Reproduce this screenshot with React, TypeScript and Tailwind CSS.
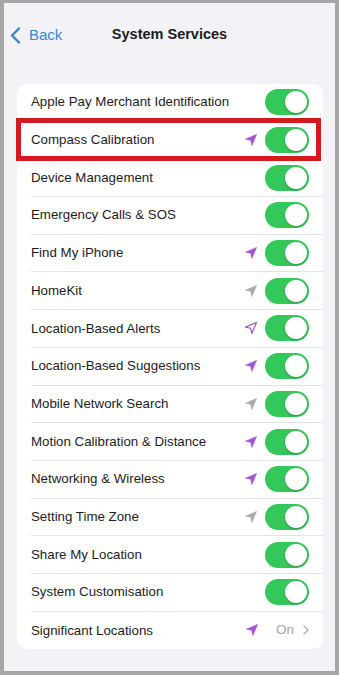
import React from 'react';

type Arrow = 'purple' | 'gray' | 'outline' | null;

type Row = {
  label: string;
  arrow: Arrow;
  detail?: string;
};

const rows: Row[] = [
  { label: 'Apple Pay Merchant Identification', arrow: null },
  { label: 'Compass Calibration', arrow: 'purple' },
  { label: 'Device Management', arrow: null },
  { label: 'Emergency Calls & SOS', arrow: null },
  { label: 'Find My iPhone', arrow: 'purple' },
  { label: 'HomeKit', arrow: 'gray' },
  { label: 'Location-Based Alerts', arrow: 'outline' },
  { label: 'Location-Based Suggestions', arrow: 'purple' },
  { label: 'Mobile Network Search', arrow: 'gray' },
  { label: 'Motion Calibration & Distance', arrow: 'purple' },
  { label: 'Networking & Wireless', arrow: 'purple' },
  { label: 'Setting Time Zone', arrow: 'gray' },
  { label: 'Share My Location', arrow: null },
  { label: 'System Customisation', arrow: null },
  { label: 'Significant Locations', arrow: 'purple', detail: 'On' },
];

function LocationArrow({ kind }: { kind: Exclude<Arrow, null> }) {
  const color = kind === 'gray' ? '#a9a9ad' : '#a453d6';
  const filled = kind !== 'outline';
  return (
    <svg width="14" height="14" viewBox="0 0 24 24" className="shrink-0">
      <polygon
        points="2.5 10.5 21.5 2.5 13.5 21.5 11.5 12.5 2.5 10.5"
        fill={filled ? color : 'none'}
        stroke={color}
        strokeWidth={filled ? 1 : 2}
        strokeLinejoin="round"
      />
    </svg>
  );
}

function Toggle() {
  return (
    <div className="flex h-[26px] w-[44px] shrink-0 items-center justify-end rounded-full bg-[#34c759] p-[2px]">
      <div className="h-[22px] w-[22px] rounded-full bg-white shadow-[0_1px_2px_rgba(0,0,0,0.25)]" />
    </div>
  );
}

export default function App() {
  return (
    <div
      className="h-[675px] w-[339px] bg-[#a6a6a6] px-[4px] pb-[4px] pt-[3px]"
      style={{ fontFamily: '"Liberation Sans", Arial, sans-serif' }}
    >
      <div className="flex h-full flex-col bg-[#f2f2f7]">
        <div className="relative flex h-[64px] items-center justify-center">
          <div className="absolute left-[6px] flex items-center gap-[8px] text-[15px] text-[#3b82d6]">
            <svg width="11" height="17" viewBox="0 0 11 17">
              <path d="M9 1.5 L2 8.5 L9 15.5" fill="none" stroke="#3b82d6" strokeWidth="2.4" strokeLinecap="round" strokeLinejoin="round" />
            </svg>
            <span>Back</span>
          </div>
          <span className="text-[14.5px] font-bold text-[#1c1c1e]">System Services</span>
        </div>

        <div className="relative ml-[13px] mr-[12px] mt-[17px] rounded-[10px] bg-white">
          {rows.map((row, i) => (
            <div key={row.label} className="flex h-[37.7px] items-center pl-[14px]">
              <div
                className={`flex h-full flex-1 items-center pr-[14px] ${
                  i < rows.length - 1 ? 'border-b border-[#e3e3e7]' : ''
                }`}
              >
                <span className="flex-1 text-[13.3px] text-[#1c1c1e]">{row.label}</span>
                {row.arrow && <LocationArrow kind={row.arrow} />}
                {row.detail ? (
                  <div className="ml-[17px] flex items-center gap-[9px] text-[13.5px] text-[#a5a5aa]">
                    <span>{row.detail}</span>
                    <svg width="6" height="10" viewBox="0 0 6 10">
                      <path d="M1 1 L5 5 L1 9" fill="none" stroke="#b3b3b8" strokeWidth="1.5" strokeLinecap="round" strokeLinejoin="round" />
                    </svg>
                  </div>
                ) : (
                  <div className="ml-[7px]">
                    <Toggle />
                  </div>
                )}
              </div>
            </div>
          ))}
          <div className="pointer-events-none absolute left-[-1px] top-[34px] h-[43px] w-[305px] border-[5px] border-[#d21a1f]" />
        </div>
      </div>
    </div>
  );
}
